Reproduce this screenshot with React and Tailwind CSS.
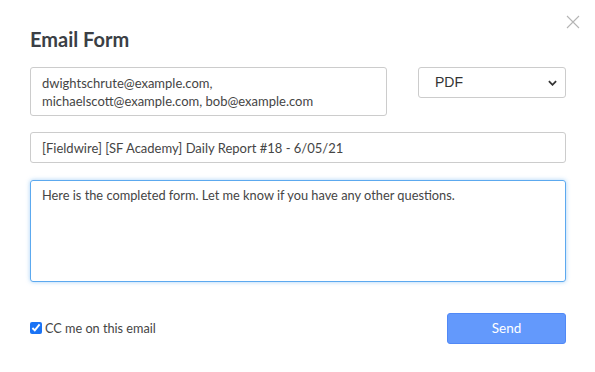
import { useState } from "react";

const font = { fontFamily: "Lato, 'Noto Sans', sans-serif" };

export default function App() {
  const [emails, setEmails] = useState(
    "dwightschrute@example.com, michaelscott@example.com, bob@example.com"
  );
  const [format, setFormat] = useState("PDF");
  const [subject, setSubject] = useState(
    "[Fieldwire] [SF Academy] Daily Report #18 - 6/05/21"
  );
  const [message, setMessage] = useState(
    "Here is the completed form. Let me know if you have any other questions."
  );
  const [cc, setCc] = useState(true);

  return (
    <div
      className="relative w-[595px] h-[372px] bg-white pl-[30px] pr-[29px] pt-[25px] text-[#454545]"
      style={font}
    >
      {/* Close */}
      <button className="absolute left-[566px] top-[15px] w-[14px] h-[14px] text-[#b5b5b5]">
        <svg viewBox="0 0 14 14" className="w-[14px] h-[14px]" fill="none" stroke="currentColor" strokeWidth="1.1">
          <path d="M1 1 L13 13 M13 1 L1 13" />
        </svg>
      </button>

      <h2 className="text-[20px] leading-[28px] font-bold text-[#3b3f45] mb-[14px]">Email Form</h2>

      {/* Recipients + format */}
      <div className="flex items-start gap-[31px]">
        <textarea
          value={emails}
          onChange={(e) => setEmails(e.target.value)}
          className="w-[357px] h-[49px] resize-none border border-[#cccccc] rounded-[3px] px-[11px] pt-[6px] text-[13px] leading-[18px] text-[#454545] outline-none overflow-hidden"
          style={font}
        />
        <div className="relative flex-1">
          <select
            value={format}
            onChange={(e) => setFormat(e.target.value)}
            className="appearance-none w-full h-[31px] border border-[#cccccc] rounded-[3px] pl-[16px] text-[14px] text-[#333] bg-white outline-none"
            style={{ fontFamily: "'Liberation Sans', Arial, sans-serif" }}
          >
            <option>PDF</option>
            <option>CSV</option>
          </select>
          <svg
            viewBox="0 0 10 6"
            className="absolute right-[9px] top-[13px] w-[9px] h-[6px] pointer-events-none text-[#333]"
            fill="none"
            stroke="currentColor"
            strokeWidth="2"
          >
            <path d="M1 1 L5 5 L9 1" />
          </svg>
        </div>
      </div>

      <input
        value={subject}
        onChange={(e) => setSubject(e.target.value)}
        className="mt-[16px] block w-full h-[31px] border border-[#cccccc] rounded-[3px] px-[11px] text-[13px] text-[#454545] outline-none"
        style={font}
      />

      <textarea
        value={message}
        onChange={(e) => setMessage(e.target.value)}
        className="mt-[17px] block w-full h-[102px] resize-none border border-[#5ca9ef] rounded-[3px] px-[11px] pt-[5px] text-[12.8px] leading-[18px] text-[#454545] outline-none shadow-[0_0_4px_rgba(92,169,239,0.55)]"
        style={font}
      />

      <div className="mt-[31px] flex items-center justify-between">
        <label className="flex items-center text-[12.7px] text-[#454545] cursor-pointer">
          <input
            type="checkbox"
            checked={cc}
            onChange={(e) => setCc(e.target.checked)}
            className="w-[12px] h-[12px] m-0 mr-[3px] accent-[#1a73f5]"
          />
          CC me on this email
        </label>
        <button className="w-[119px] h-[31px] rounded-[3px] bg-[#6399fc] border border-[#5189f6] text-white text-[13.5px]">
          Send
        </button>
      </div>
    </div>
  );
}
